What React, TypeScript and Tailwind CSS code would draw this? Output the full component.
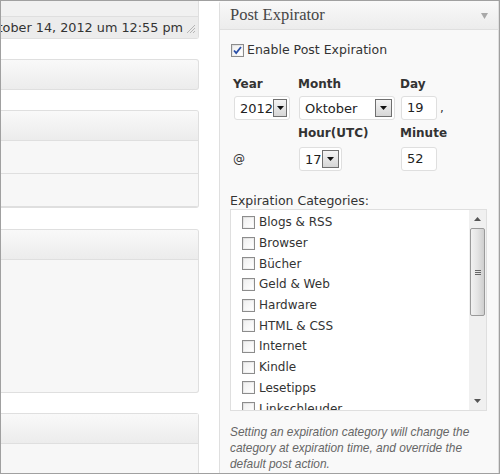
import React from 'react'

const verdana = { fontFamily: '"DejaVu Sans", Verdana, sans-serif' }

const categories = [
  'Blogs & RSS',
  'Browser',
  'Bücher',
  'Geld & Web',
  'Hardware',
  'HTML & CSS',
  'Internet',
  'Kindle',
  'Lesetipps',
  'Linkschleuder',
]

// old-school native select with the grey arrow button
function Select({ value, width }: { value: string; width: string }) {
  return (
    <div className={`${width} h-[24px] border border-[#dfdfdf] rounded-[3px] bg-white flex items-center justify-between pl-[5px] pr-[2px]`}>
      <span className="text-[13px] text-[#222] leading-none">{value}</span>
      <span className="w-[17px] h-[18px] border border-[#6f6f6f] bg-gradient-to-b from-[#f4f4f4] to-[#d6d6d6] flex items-center justify-center">
        <svg width="7" height="4" viewBox="0 0 7 4">
          <path d="M0 0h7L3.5 4z" fill="#111" />
        </svg>
      </span>
    </div>
  )
}

function Box({ checked }: { checked?: boolean }) {
  return (
    <span className="w-[13px] h-[13px] shrink-0 border border-[#8c8c8c] bg-gradient-to-br from-[#dcdcdc] to-[#fafafa] flex items-center justify-center">
      <span className="w-[9px] h-[9px] bg-gradient-to-br from-[#f0f0f0] to-white flex items-center justify-center">
        {checked && (
          <svg width="9" height="9" viewBox="0 0 9 9">
            <path d="M1 4.5l2.2 2.6L8 1" stroke="#2a4fa8" strokeWidth="1.8" fill="none" />
          </svg>
        )}
      </span>
    </span>
  )
}

function LeftBox({ height, rows }: { height: string; rows: number }) {
  return (
    <div className={`${height} shrink-0 border border-l-0 border-[#dfdfdf] rounded-r-[3px] bg-[#f7f7f7] flex flex-col overflow-hidden`}>
      <div className="h-[30px] shrink-0 bg-gradient-to-b from-[#f9f9f9] to-[#ececec] border-b border-[#dfdfdf]" />
      {Array.from({ length: rows }).map((_, i) => (
        <div key={i} className="h-[33px] shrink-0 border-b border-[#dfdfdf]" />
      ))}
    </div>
  )
}

export default function App() {
  return (
    <div className="w-[500px] h-[474px] border border-[#a0a0a0] bg-white overflow-hidden flex" style={verdana}>
      {/* left column: editor meta boxes cut off at the edge */}
      <div className="w-[198px] shrink-0 flex flex-col overflow-hidden">
        <div className="h-[38px] shrink-0 border border-t-0 border-l-0 border-[#dfdfdf] rounded-br-[3px] flex flex-col">
          <div className="h-[16px] bg-[#f1f1f1] border-b border-[#dfdfdf]" />
          <div className="flex-1 bg-[#ececec] flex items-center justify-end pr-[2px] gap-[3px]">
            <span className="text-[12.8px] text-[#333] whitespace-nowrap">October 14, 2012 um 12:55 pm</span>
            <svg width="10" height="10" viewBox="0 0 10 10" className="mt-[3px] shrink-0">
              <path d="M9 1L1 9M9 4L4 9M9 7L7 9" stroke="#b5b5b5" strokeWidth="1" />
            </svg>
          </div>
        </div>
        <div className="mt-[20px] h-[31px] shrink-0 border border-l-0 border-[#dfdfdf] rounded-r-[3px] bg-gradient-to-b from-[#f9f9f9] to-[#ececec]" />
        <div className="mt-[20px] shrink-0">
          <LeftBox height="h-[98px]" rows={2} />
        </div>
        <div className="mt-[21px] shrink-0">
          <LeftBox height="h-[164px]" rows={0} />
        </div>
        <div className="mt-[20px] h-[80px] shrink-0 border border-l-0 border-[#dfdfdf] rounded-tr-[3px] bg-[#f7f7f7]">
          <div className="h-[30px] bg-gradient-to-b from-[#f9f9f9] to-[#ececec] border-b border-[#dfdfdf]" />
        </div>
      </div>

      {/* right column: Post Expirator meta box */}
      <div className="ml-[20px] w-[280px] shrink-0 border-x border-[#dfdfdf] rounded-tl-[3px] bg-[#f9f9f9] flex flex-col">
        <div className="h-[29px] shrink-0 bg-gradient-to-b from-[#f9f9f9] to-[#ececec] border-b border-[#dfdfdf] flex items-center justify-between pl-[10px] pr-[10px]">
          <span className="text-[16.5px] text-[#464646]" style={{ fontFamily: '"Liberation Serif", Georgia, serif' }}>
            Post Expirator
          </span>
          <svg width="7" height="6" viewBox="0 0 7 6" className="mt-[2px]">
            <path d="M0 0h7L3.5 6z" fill="#a8a8a8" />
          </svg>
        </div>

        <div className="px-[10px] flex flex-col text-[#333]">
          <label className="mt-[12px] h-[16px] flex items-center gap-[3px] pl-[1px]">
            <Box checked />
            <span className="text-[12.5px] mt-[1px]">Enable Post Expiration</span>
          </label>

          <div className="mt-[17px] h-[18px] flex items-center text-[12px] font-bold pl-[3px]">
            <span className="w-[65px]">Year</span>
            <span className="w-[102px]">Month</span>
            <span>Day</span>
          </div>
          <div className="mt-[3px] h-[24px] flex items-center pl-[4px]">
            <div className="w-[65px]">
              <Select value="2012" width="w-[56px]" />
            </div>
            <div className="w-[102px]">
              <Select value="Oktober" width="w-[96px]" />
            </div>
            <div className="w-[36px] h-[24px] border border-[#dfdfdf] rounded-[3px] bg-white flex items-center pl-[5px] text-[13px] text-[#222]">19</div>
            <span className="ml-[3px] text-[12px]">,</span>
          </div>

          <div className="mt-[4px] h-[18px] flex items-center text-[12px] font-bold pl-[68px]">
            <span className="w-[102px]">Hour(UTC)</span>
            <span>Minute</span>
          </div>
          <div className="mt-[5px] h-[24px] flex items-center pl-[3px]">
            <span className="w-[66px] text-[12px]">@</span>
            <div className="w-[102px]">
              <Select value="17" width="w-[43px]" />
            </div>
            <div className="w-[36px] h-[24px] border border-[#dfdfdf] rounded-[3px] bg-white flex items-center pl-[5px] text-[13px] text-[#222]">52</div>
          </div>

          <div className="mt-[22px] h-[16px] flex items-center text-[12.5px]">Expiration Categories:</div>
          <div className="w-[257px] h-[202px] border border-[#dfdfdf] bg-white flex overflow-hidden">
            <div className="flex-1 pt-[2px] pl-[11px] overflow-hidden">
              {categories.map((c) => (
                <div key={c} className="h-[20.7px] flex items-center gap-[4px] shrink-0">
                  <Box />
                  <span className="text-[12px] text-[#333] whitespace-nowrap">{c}</span>
                </div>
              ))}
            </div>
            {/* scrollbar */}
            <div className="w-[17px] shrink-0 bg-[#f0f0f0] flex flex-col items-center">
              <div className="h-[18px] flex items-center justify-center">
                <svg width="7" height="4" viewBox="0 0 7 4">
                  <path d="M0 4h7L3.5 0z" fill="#555" />
                </svg>
              </div>
              <div className="w-[15px] h-[88px] border border-[#9a9a9a] rounded-[2px] bg-gradient-to-r from-[#f2f2f2] via-[#e4e4e4] to-[#cfcfcf] flex flex-col items-center justify-center gap-[1px]">
                <span className="w-[6px] h-[1px] bg-[#666]" />
                <span className="w-[6px] h-[1px] bg-[#666]" />
                <span className="w-[6px] h-[1px] bg-[#666]" />
              </div>
              <div className="flex-1" />
              <div className="h-[18px] flex items-center justify-center">
                <svg width="7" height="4" viewBox="0 0 7 4">
                  <path d="M0 0h7L3.5 4z" fill="#555" />
                </svg>
              </div>
            </div>
          </div>

          <p
            className="mt-[13px] text-[11.9px] leading-[16px] italic text-[#666]"
            style={{ fontFamily: '"Liberation Sans", Arial, sans-serif' }}
          >
            Setting an expiration category will change the category at expiration time, and override the default post action.
          </p>
        </div>
      </div>
    </div>
  )
}
